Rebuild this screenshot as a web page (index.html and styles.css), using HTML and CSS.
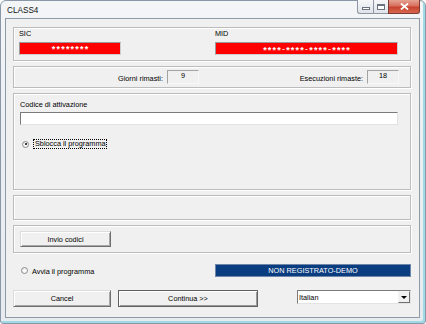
FILE: index.html
```html
<!DOCTYPE html>
<html lang="it">
<head>
    <meta charset="UTF-8">
    <title>CLASS4</title>
    <link rel="stylesheet" href="styles.css">
</head>
<body>
    <div class="window">
        <div class="titlebar">
            <span class="title">CLASS4</span>
            <div class="caption-btns">
                <span class="cbtn min"><span class="min-bar"></span></span>
                <span class="cbtn max"><span class="max-box"></span></span>
                <span class="cbtn close">
                    <svg width="9" height="7" viewBox="0 0 9 7"><path d="M1 0.5 L8 6.5 M8 0.5 L1 6.5" stroke="#fff" stroke-width="1.8"/></svg>
                </span>
            </div>
        </div>

        <div class="client">
            <div class="group g-ids">
                <div class="field sic">
                    <div class="lbl">SIC</div>
                    <div class="redbox">********</div>
                </div>
                <div class="field mid">
                    <div class="lbl">MID</div>
                    <div class="redbox">****<span class="dash">-</span>****<span class="dash">-</span>****<span class="dash">-</span>****</div>
                </div>
            </div>

            <div class="group g-stats">
                <div class="stat s-days">
                    <span class="stat-lbl">Giorni rimasti:</span>
                    <span class="num">9</span>
                </div>
                <div class="stat s-runs">
                    <span class="stat-lbl">Esecuzioni rimaste:</span>
                    <span class="num">18</span>
                </div>
            </div>

            <div class="group g-code">
                <div class="lbl">Codice di attivazione</div>
                <div class="textbox"></div>
                <div class="radio-row unlock">
                    <span class="radio checked"></span>
                    <span class="focus">Sblocca il programma</span>
                </div>
            </div>

            <div class="group g-empty"></div>

            <div class="group g-send">
                <button class="btn invio">Invio codici</button>
            </div>

            <div class="status-row">
                <div class="radio-row">
                    <span class="radio"></span>
                    <span class="radio-lbl">Avvia il programma</span>
                </div>
                <div class="status">NON REGISTRATO-DEMO</div>
            </div>

            <div class="actions">
                <button class="btn cancel">Cancel</button>
                <button class="btn default continua">Continua &gt;&gt;</button>
                <div class="combo">
                    <span class="combo-text">Italian</span>
                    <span class="combo-arrow"></span>
                </div>
            </div>
        </div>
    </div>
</body>
</html>
```

FILE: styles.css
```css
:root {
    --face: #f0f0f0;
    --etch: #bcbcbc;
    --sunk: #9c9c9c;
}

* {
    box-sizing: border-box;
}

body {
    margin: 0;
    background: #ffffff;
    font-family: 'Liberation Sans', Arial, sans-serif;
    font-size: 7.3px;
    color: #000;
}

/* window frame */
.window {
    width: 426px;
    height: 324px;
    border: 1px solid #8a97a6;
    border-radius: 6px 6px 3px 3px;
    padding: 0 5px 5px 4px;
    background: linear-gradient(to bottom, #f3f5f7 0%, #eceff2 40%, #e7ebef 100%);
    box-shadow: inset -2px -2px 0 #9fd9e6;
    display: flex;
    flex-direction: column;
}

.titlebar {
    height: 17px;
    display: flex;
    justify-content: space-between;
    align-items: flex-start;
}

.title {
    padding: 5px 0 0 2px;
    font-size: 8.2px;
    color: #111;
}

.caption-btns {
    display: flex;
    margin-top: -1px;
    height: 14px;
}

.cbtn {
    display: flex;
    align-items: center;
    justify-content: center;
    height: 14px;
    border: 1px solid #8d96a2;
    border-top: none;
}

.min {
    width: 16px;
    border-right: none;
    border-radius: 0 0 0 3px;
    background: linear-gradient(to bottom, #f6f7f9, #dfe3e8);
}

.max {
    width: 15px;
    border-right: none;
    background: linear-gradient(to bottom, #f6f7f9, #dfe3e8);
}

.close {
    width: 32px;
    border-color: #7d3a35;
    border-radius: 0 0 3px 0;
    background: linear-gradient(to bottom, #e6a393 0%, #d86f5e 45%, #c7432f 55%, #d8664e 100%);
}

.min-bar {
    width: 8px;
    height: 3px;
    border: 1px solid #6b7380;
    background: #fff;
    margin-top: 3px;
}

.max-box {
    width: 8px;
    height: 6px;
    border: 1px solid #6b7380;
    border-top-width: 2px;
    background: #fff;
}

/* client area */
.client {
    flex: 1;
    border: 1px solid #8e9aa8;
    background: var(--face);
    padding: 8px 8px 0 7px;
    display: flex;
    flex-direction: column;
}

.group {
    border: 1px solid var(--etch);
    box-shadow: inset 1px 1px 0 #fff, 1px 1px 0 #fff;
    margin-bottom: 5px;
}

.lbl {
    height: 10px;
    line-height: 10px;
}

.g-ids {
    height: 34px;
    padding: 1px 0 0 5px;
    display: grid;
    grid-template-columns: 102px 183px;
    column-gap: 94px;
}

.redbox {
    margin-top: 3px;
    height: 13px;
    padding-top: 1px;
    background: #ff0000;
    color: #fff;
    border: 1px solid;
    border-color: #9a9a9a #cfcfcf #cfcfcf #9a9a9a;
    text-align: center;
    font-size: 9px;
    font-weight: bold;
    line-height: 10px;
    letter-spacing: 1.2px;
    text-indent: 1.2px;
}

.dash {
    vertical-align: 1px;
    font-weight: normal;
}

.g-stats {
    height: 22px;
    display: grid;
    grid-template-columns: 185px 200px;
    align-items: center;
}

.stat {
    display: flex;
    justify-content: flex-end;
    align-items: center;
    gap: 4px;
}

.stat-lbl {
    margin-top: 3px;
}

.num {
    width: 32px;
    height: 14px;
    border: 1px solid;
    border-color: #a3a3a3 #f8f8f8 #f8f8f8 #a3a3a3;
    text-align: center;
    line-height: 10px;
}

.g-code {
    height: 97px;
    padding: 6px 12px 0 6px;
}

.textbox {
    margin-top: 2px;
    height: 13px;
    background: #fff;
    border: 1px solid;
    border-color: #7a7a7a #e3e3e3 #e3e3e3 #7a7a7a;
}

.radio-row {
    display: flex;
    align-items: center;
    gap: 4px;
}

.unlock {
    margin-top: 14px;
    padding-left: 2px;
}

.radio {
    width: 7px;
    height: 7px;
    border-radius: 50%;
    border: 1px solid #8b8b8b;
    background: radial-gradient(circle at 60% 60%, #fff 0%, #e4e4e4 100%);
    position: relative;
}

.radio.checked::after {
    content: '';
    position: absolute;
    left: 1.5px;
    top: 1.5px;
    width: 2px;
    height: 2px;
    border-radius: 50%;
    background: #000;
}

.focus {
    height: 10px;
    line-height: 8px;
    padding: 0 0 0 1px;
    border: 1px dotted #000;
}

.g-empty {
    height: 25px;
}

.g-send {
    height: 28px;
    padding: 5px 0 0 6px;
}

.btn {
    font: inherit;
    color: #000;
    background: var(--face);
    border: 1px solid;
    border-color: #dcdcdc #6f6f6f #6f6f6f #dcdcdc;
    box-shadow: inset 1px 1px 0 #fff, inset -1px -1px 0 #a8a8a8;
    padding: 0;
    height: 16px;
}

.invio {
    width: 91px;
}

.status-row {
    margin-top: 6px;
    padding-left: 8px;
    display: flex;
    justify-content: space-between;
    align-items: center;
}

.radio-lbl {
    margin-top: 1px;
}

.status {
    width: 196px;
    height: 13px;
    background: #0a3d80;
    color: #fff;
    text-align: center;
    line-height: 12px;
    border: 1px solid #6f86a8;
}

.actions {
    margin-top: 13px;
    display: flex;
    align-items: flex-start;
    gap: 7px;
}

.cancel {
    width: 98px;
    height: 17px;
}

.continua {
    width: 140px;
    height: 17px;
}

.btn.default {
    border-color: #606060;
    box-shadow: inset 1px 1px 0 #fff, inset -1px -1px 0 #9a9a9a;
}

.combo {
    margin-left: auto;
    width: 114px;
    height: 14px;
    background: #fff;
    border: 1px solid;
    border-color: #7a7a7a #e3e3e3 #e3e3e3 #7a7a7a;
    display: flex;
    align-items: center;
    justify-content: space-between;
}

.combo-text {
    padding-left: 1px;
}

.combo-arrow {
    width: 12px;
    height: 12px;
    background: var(--face);
    border: 1px solid;
    border-color: #f4f4f4 #6f6f6f #6f6f6f #f4f4f4;
    position: relative;
}

.combo-arrow::after {
    content: '';
    position: absolute;
    left: 2px;
    top: 4px;
    border-left: 3px solid transparent;
    border-right: 3px solid transparent;
    border-top: 3px solid #000;
}
```
